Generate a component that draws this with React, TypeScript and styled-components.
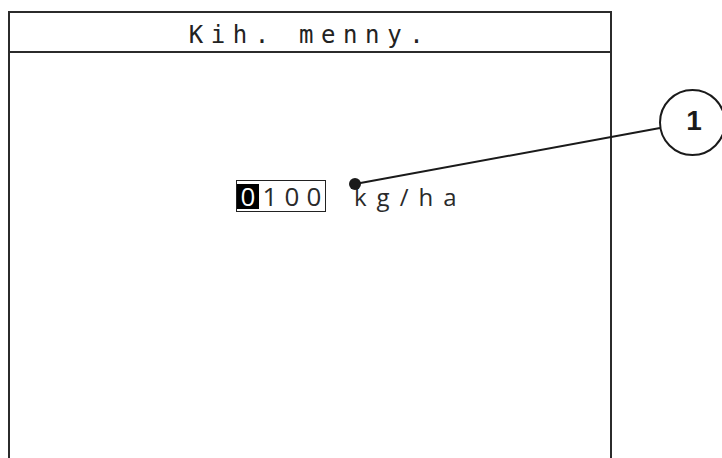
import styled, { createGlobalStyle } from "styled-components";

const GlobalStyle = createGlobalStyle`
  html, body {
    margin: 0;
    padding: 0;
    background: #ffffff;
    overflow: hidden;
  }
`;

const Page = styled.div`
  position: relative;
  width: 722px;
  height: 458px;
  padding: 11px 0 0 8px;
  box-sizing: border-box;
  overflow: hidden;
`;

const Screen = styled.div`
  width: 604px;
  height: 447px;
  border: 2px solid #2b2b2b;
  border-bottom: none;
  display: flex;
  flex-direction: column;
  box-sizing: border-box;
`;

const Header = styled.div`
  height: 40px;
  border-bottom: 2px solid #2b2b2b;
  display: flex;
  align-items: center;
  justify-content: center;
  padding: 5px 0 0 0;
  box-sizing: border-box;
  font-family: "DejaVu Sans Mono", monospace;
  font-size: 24px;
  letter-spacing: 7.6px;
  color: #222;
`;

const Body = styled.div`
  padding: 127px 0 0 226px;
  display: flex;
  align-items: baseline;
  gap: 28px;
`;

const ValueBox = styled.div`
  display: flex;
  align-items: center;
  height: 32px;
  padding: 0;
  border: 1.5px solid #222;
  box-sizing: border-box;
  font-family: "Open Sans", sans-serif;
  font-weight: 500;
  font-size: 26px;
  color: #2a2a2a;
`;

const Digit = styled.span<{ $active?: boolean }>`
  width: 22px;
  height: 25px;
  display: flex;
  align-items: center;
  justify-content: center;
  background: ${(p) => (p.$active ? "#000" : "transparent")};
  color: ${(p) => (p.$active ? "#fff" : "#2a2a2a")};
  line-height: 1;
`;

const Unit = styled.span`
  font-family: "Open Sans", sans-serif;
  font-weight: 500;
  font-size: 24px;
  letter-spacing: 10px;
  color: #2a2a2a;
`;

const Callout = styled.svg`
  position: absolute;
  left: 0;
  top: 0;
  pointer-events: none;
`;

const value = "0100";

export default function App() {
  return (
    <>
      <GlobalStyle />
      <Page>
        <Screen>
          <Header>Kih. menny.</Header>
          <Body>
            <ValueBox>
              {value.split("").map((d, i) => (
                <Digit key={i} $active={i === 0}>
                  {d}
                </Digit>
              ))}
            </ValueBox>
            <Unit>kg/ha</Unit>
          </Body>
        </Screen>
        <Callout width="722" height="458" viewBox="0 0 722 458">
          <line x1="355" y1="184" x2="660" y2="128" stroke="#1a1a1a" strokeWidth="2" />
          <circle cx="355" cy="184" r="6" fill="#1a1a1a" />
          <circle cx="692.5" cy="122.5" r="32.5" fill="#fff" stroke="#1a1a1a" strokeWidth="2" />
          <text
            x="694"
            y="130"
            textAnchor="middle"
            fontFamily="Liberation Sans, Arial, sans-serif"
            fontWeight="bold"
            fontSize="28"
            fill="#1a1a1a"
          >
            1
          </text>
        </Callout>
      </Page>
    </>
  );
}
